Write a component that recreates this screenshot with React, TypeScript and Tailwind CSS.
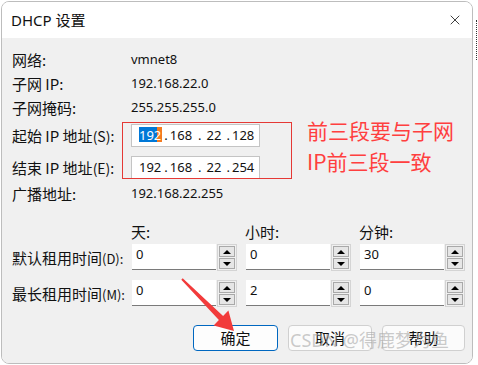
import { X } from "lucide-react";

const cjk = { fontFamily: '"Noto Sans CJK SC", "Noto Sans", sans-serif' };
const latin = { fontFamily: '"Noto Sans", "Noto Sans CJK SC", sans-serif' };

function InfoRow({ label, value }: { label: string; value: string }) {
  return (
    <div className="flex h-[24px] items-center">
      <div className="w-[119px] text-[15px] leading-none" style={cjk}>
        {label}
      </div>
      <div className="text-[13px] leading-none" style={latin}>
        {value}
      </div>
    </div>
  );
}

function IpField({ last, selected }: { last: string; selected?: boolean }) {
  return (
    <div
      className="flex h-[23px] w-[129px] items-center border border-[#c4c4c4] bg-white pl-[7px] text-[13px] leading-none"
      style={latin}
    >
      {selected ? (
        <span className="relative inline-block text-white">
          <span className="absolute left-0 top-[-2px] h-[15px] w-[18px] bg-[#0078d7]" />
          <span className="absolute left-[18px] top-[-2px] h-[15px] w-[5px] bg-[#f47b20]" />
          <span className="relative">192</span>
        </span>
      ) : (
        <span>192</span>
      )}
      <span className="ml-[3px]">.</span>
      <span className="ml-[2px]">168</span>
      <span className="ml-[6px]">.</span>
      <span className="ml-[5px]">22</span>
      <span className="ml-[5px]">.</span>
      <span className="ml-[2px]">{last}</span>
    </div>
  );
}

function Spinner() {
  return (
    <div className="ml-[1px] flex h-[27px] w-[20px] flex-col gap-[1px] border border-[#d4d4d4] bg-[#f0f0f0] p-[1px]">
      <div className="flex flex-1 items-center justify-center border border-[#a9a9a9] bg-[#e6e6e6]">
        <svg width="8" height="4" viewBox="0 0 8 4">
          <polygon points="4,0 8,4 0,4" fill="#000" />
        </svg>
      </div>
      <div className="flex flex-1 items-center justify-center border border-[#a9a9a9] bg-[#e6e6e6]">
        <svg width="8" height="4" viewBox="0 0 8 4">
          <polygon points="0,0 8,0 4,4" fill="#000" />
        </svg>
      </div>
    </div>
  );
}

function SpinBox({ value }: { value: string }) {
  return (
    <div className="flex w-[105px] items-start">
      <div
        className="h-[26px] w-[84px] border-b border-[#7a7a7a] bg-white pl-[4px] pt-[4px] text-[13px] leading-none"
        style={latin}
      >
        {value}
      </div>
      <Spinner />
    </div>
  );
}

function SpinRow({ label, values }: { label: React.ReactNode; values: string[] }) {
  return (
    <div className="flex h-[27px] items-center">
      <div className="w-[120px] text-[15px] leading-none" style={cjk}>
        {label}
      </div>
      <div className="flex gap-[9px]">
        {values.map((v, i) => (
          <SpinBox key={i} value={v} />
        ))}
      </div>
    </div>
  );
}

export default function App() {
  return (
    <div className="relative h-[365px] w-[478px] overflow-hidden bg-white text-[#111]">
      <div className="absolute right-[1px] top-[20px] h-[40px] border-r border-dotted border-[#333]" />
      <div className="ml-[1px] mt-[1px] flex h-[363px] w-[472px] flex-col overflow-hidden rounded-[8px] border border-[#bdbdbd]">
        {/* title bar */}
        <div className="flex h-[36px] shrink-0 items-center justify-between bg-white pl-[9px] pr-[9px]">
          <span className="text-[15px]" style={latin}>
            DHCP 设置
          </span>
          <X className="h-[16px] w-[16px] text-[#222]" strokeWidth={1.3} />
        </div>

        <div className="flex-1 bg-[#f0f0f0] pl-[10px] pt-[9px]">
          <InfoRow label="网络:" value="vmnet8" />
          <InfoRow label="子网 IP:" value="192.168.22.0" />
          <InfoRow label="子网掩码:" value="255.255.255.0" />

          <div className="relative mt-[4px] flex items-start">
            <div className="flex flex-col gap-[8px]">
              <div className="flex h-[24px] items-center">
                <div className="w-[119px] text-[15px] leading-none" style={cjk}>
                  起始 IP 地址<span className="text-[14px]">(S):</span>
                </div>
                <IpField last="128" selected />
              </div>
              <div className="flex h-[24px] items-center">
                <div className="w-[119px] text-[15px] leading-none" style={cjk}>
                  结束 IP 地址<span className="text-[14px]">(E):</span>
                </div>
                <IpField last="254" />
              </div>
            </div>
            <div className="absolute left-[110px] top-[-1px] h-[57px] w-[170px] border border-[#e53935]" />
            <div
              className="-mt-[8px] ml-[47px] text-[21px] leading-[31px] text-[#ff3f3f]"
              style={cjk}
            >
              前三段要与子网
              <br />
              IP前三段一致
            </div>
          </div>

          <div className="mt-[2px]">
            <InfoRow label="广播地址:" value="192.168.22.255" />
          </div>

          <div className="mt-[16px] flex h-[20px] items-center text-[15px] leading-none" style={cjk}>
            <div className="w-[119px]" />
            <div className="flex gap-[9px]">
              <div className="w-[105px]">天:</div>
              <div className="w-[105px]">小时:</div>
              <div className="w-[105px]">分钟:</div>
            </div>
          </div>

          <div className="mt-[3px]">
            <SpinRow
              label={
                <>
                  默认租用时间<span className="text-[13px]">(D):</span>
                </>
              }
              values={["0", "0", "30"]}
            />
          </div>
          <div className="mt-[9px]">
            <SpinRow
              label={
                <>
                  最长租用时间<span className="text-[13px]">(M):</span>
                </>
              }
              values={["0", "2", "0"]}
            />
          </div>

          <div className="mt-[18px] flex justify-end gap-[10px] pr-[7px] text-[15px]" style={cjk}>
            <button className="flex h-[26px] w-[85px] items-center justify-center rounded-[4px] border border-[#0067c0] bg-[#fdfdfd]">
              确定
            </button>
            <button className="flex h-[26px] w-[84px] items-center justify-center rounded-[4px] border border-[#d0d0d0] bg-[#fbfbfb]">
              取消
            </button>
            <button className="flex h-[26px] w-[83px] items-center justify-center rounded-[4px] border border-[#d0d0d0] bg-[#fbfbfb]">
              帮助
            </button>
          </div>
        </div>
      </div>

      {/* red arrow annotation */}
      <svg className="pointer-events-none absolute left-0 top-0" width="478" height="365">
        <polygon
          points="182.7,278.3 223.1,315.9 228.4,310.6 234,331 213.6,325.4 218.9,320.1 181.3,279.7"
          fill="#f23b3b"
        />
      </svg>

      {/* watermark */}
      <div
        className="pointer-events-none absolute left-[290px] top-[331px] text-[18px] leading-none text-[#a8a8a8]/60"
        style={latin}
      >
        CSDN @得鹿梦为鱼
      </div>
    </div>
  );
}
